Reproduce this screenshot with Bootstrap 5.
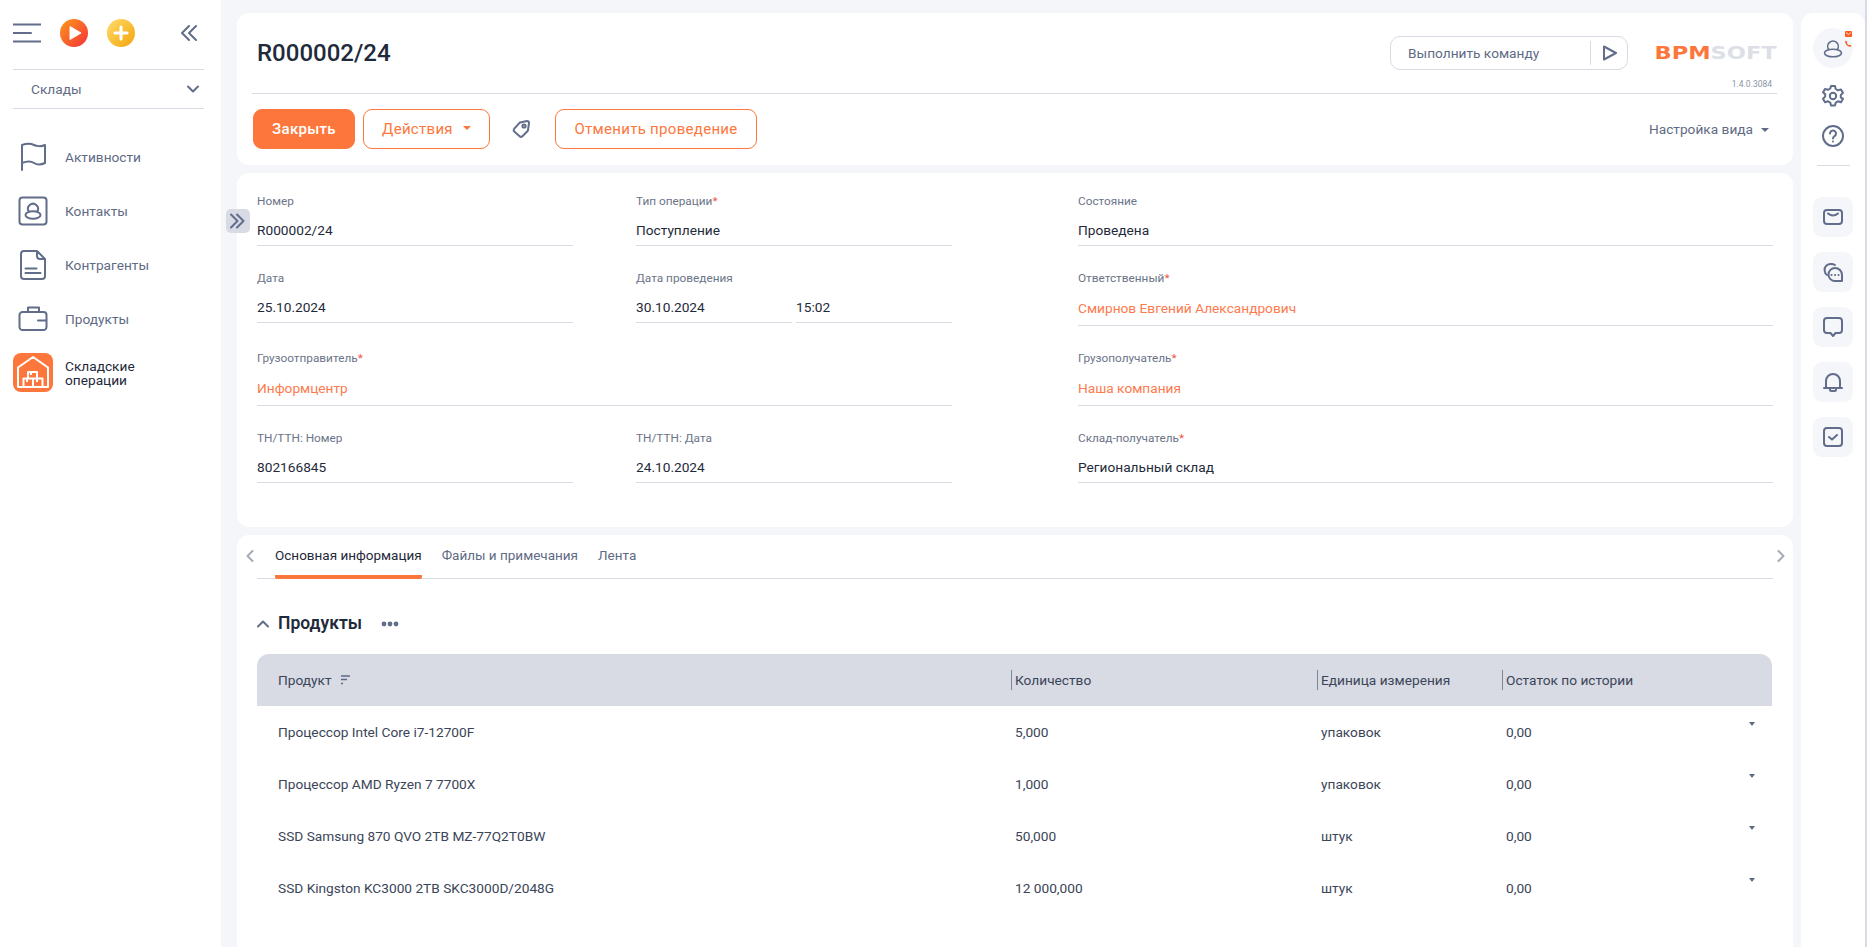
<!DOCTYPE html>
<html lang="ru">
<head>
  <meta charset="UTF-8">
  <title>R000002/24</title>
  <link href="https://cdn.jsdelivr.net/npm/bootstrap@5.3.0/dist/css/bootstrap.min.css" rel="stylesheet">
  <style>
    :root {
      --brand: #fd773c;
      --ink: #1f2a3a;
      --muted: #5f6b85;
      --line: #d8dbe4;
      --page: #f5f6fa;
    }

    html, body {
      height: 947px;
      overflow: hidden;
    }

    body {
      background: var(--page);
      border-right: 2px solid var(--line);
      color: var(--ink);
      font-family: Roboto, "Liberation Sans", sans-serif;
      font-size: 13.7px;
    }

    svg {
      display: block;
      flex: none;
    }

    .ico {
      fill: none;
      stroke: #616d8a;
      stroke-width: 2;
      stroke-linecap: round;
      stroke-linejoin: round;
    }

    /* left menu */
    .side {
      width: 221px;
      height: 947px;
      flex: none;
      background: #fff;
      padding: 0 17px 0 13px;
    }

    .side-top {
      height: 69px;
      padding-top: 19px;
    }

    .side-section {
      height: 40px;
      padding: 0 5px 0 18px;
      border-top: 1px solid var(--line);
      border-bottom: 1px solid var(--line);
      color: var(--muted);
    }

    .side-nav {
      margin-top: 28px;
      gap: 14px;
    }

    .side-nav a {
      height: 40px;
      gap: 12px;
      color: var(--muted);
      text-decoration: none;
      line-height: 14px;
    }

    .side-nav a.active {
      color: var(--ink);
    }

    /* cards */
    .content {
      width: 1556px;
      margin-left: 16px;
      padding-top: 13px;
      gap: 8px;
      height: 947px;
    }

    .panel {
      background: #fff;
      border-radius: 12px;
    }

    .head-card {
      height: 152px;
      padding: 0 16px 0 15px;
    }

    .title-row {
      height: 81px;
      border-bottom: 1px solid var(--line);
      padding-left: 5px;
    }

    .title-row h1 {
      font-size: 24px;
      font-weight: 500;
      margin: 26px 0 0;
    }

    .command {
      width: 238px;
      height: 34px;
      margin-top: 23px;
      border: 1px solid var(--line);
      border-radius: 10px;
      color: var(--muted);
      padding-left: 17px;
    }

    .command i {
      width: 1px;
      height: 24px;
      background: var(--line);
      margin-left: auto;
      margin-right: 11px;
    }

    .command svg {
      margin-right: 9px;
    }

    .logo-box {
      width: 149px;
      padding-top: 30px;
      text-align: right;
    }

    .logo {
      display: inline-block;
      font-family: "DejaVu Sans", sans-serif;
      font-size: 18px;
      font-weight: 700;
      line-height: 20px;
      color: #dcdfe6;
      transform: scaleX(1.25);
      transform-origin: right center;
    }

    .logo b {
      color: var(--brand);
    }

    .version {
      margin-top: 13px;
      padding-right: 5px;
      font-size: 8.5px;
      line-height: 12px;
      color: #8d94a6;
    }

    .btn-brand, .btn-line {
      height: 40px;
      border-radius: 9px;
      font-size: 15px;
      padding: 0;
      letter-spacing: .3px;
      white-space: nowrap;
    }

    .btn-brand {
      width: 102px;
      margin-left: 1px;
      background: var(--brand);
      border: 1px solid var(--brand);
      color: #fff;
      font-weight: 500;
    }

    .btn-line {
      background: #fff;
      border: 1px solid var(--brand);
      color: var(--brand);
    }

    .btn-line.dropdown-toggle::after {
      margin-left: 10px;
    }

    .view-set {
      color: var(--muted);
      padding-right: 8px;
    }

    .view-set::after {
      display: inline-block;
      content: "";
      margin-left: 8px;
      vertical-align: 2px;
      border-top: 4px solid var(--muted);
      border-left: 4px solid transparent;
      border-right: 4px solid transparent;
    }

    /* form */
    .form-card {
      height: 354px;
      padding: 20px 20px 0;
      position: relative;
    }

    .form-grid {
      display: grid;
      grid-template-columns: 316px 316px 758px;
      grid-template-rows: 77px 80px 80px 53px;
      column-gap: 63px;
    }

    .col-right {
      margin-left: 63px;
    }

    .field {
      height: 53px;
      border-bottom: 1px solid var(--line);
    }

    .field.tall {
      height: 56px;
    }

    .field label, .field-label {
      display: block;
      height: 16px;
      font-size: 11.8px;
      line-height: 16px;
      color: #6b7488;
      margin: 0;
    }

    .field label em {
      color: #f0523d;
      font-style: normal;
    }

    .field p {
      margin: 11px 0 0;
      line-height: 20px;
    }

    .field.tall p {
      margin-top: 12px;
    }

    .field a {
      color: #fd7a4e;
      text-decoration: none;
    }

    .date-pair {
      display: grid;
      grid-template-columns: 1fr 1fr;
      gap: 4px;
    }

    .date-pair .field {
      height: 37px;
    }

    .toggle-panel {
      position: absolute;
      left: -11px;
      top: 36px;
      width: 24px;
      height: 24px;
      background: var(--line);
      border-radius: 5px;
      border: 0;
      padding: 0 0 0 4px;
    }

    /* tabs and table */
    .tabs-card {
      flex: 1;
      padding: 0 20px;
      position: relative;
      border-radius: 12px 12px 0 0;
    }

    .tabs {
      height: 44px;
      gap: 20px;
      border-bottom: 1px solid var(--line);
      padding-left: 18px;
      font-size: 13.5px;
    }

    .tabs a {
      height: 44px;
      line-height: 41px;
      color: var(--muted);
      text-decoration: none;
    }

    .tabs a.active {
      color: var(--ink);
      border-bottom: 4px solid var(--brand);
      border-radius: 0 0 2px 2px;
    }

    .tab-arrow {
      position: absolute;
      top: 15px;
    }

    .section-head {
      height: 75px;
      padding-top: 14px;
      gap: 8px;
    }

    .section-head h2 {
      font-size: 17.5px;
      font-weight: 600;
      margin: 0 0 0 1px;
    }

    .products {
      width: 1515px;
      table-layout: fixed;
      margin: 0;
      --bs-table-color: #3b4558;
    }

    .products th, .products td {
      height: 52px;
      padding: 0 0 0 4px;
      border: 0;
      vertical-align: middle;
      font-weight: 400;
    }

    .products th {
      background: var(--line);
    }

    .products th:first-child {
      border-radius: 12px 0 0 0;
    }

    .products th:last-child {
      border-radius: 0 12px 0 0;
    }

    .products tr > :first-child {
      padding-left: 21px;
    }

    .products th span {
      display: block;
      line-height: 20px;
      margin-left: -4px;
      padding-left: 3px;
      border-left: 1px solid #7d8597;
    }

    .products th:first-child span {
      display: flex;
      align-items: center;
      gap: 9px;
      border: 0;
      margin: 0;
      padding: 0;
    }

    .row-caret {
      align-self: flex-start;
      margin: 0 17px 0 0;
      border-top: 4px solid var(--muted);
      border-left: 3.5px solid transparent;
      border-right: 3.5px solid transparent;
    }

    /* right rail */
    .rail {
      width: 64px;
      margin: 13px 0 0 8px;
      height: 934px;
      padding-top: 15px;
      border-radius: 12px 12px 0 0;
    }

    .avatar {
      width: 40px;
      height: 40px;
      border-radius: 50%;
      background: var(--page);
      position: relative;
    }

    .avatar .badge-mail, .avatar .badge-call {
      position: absolute;
      right: 1px;
    }

    .avatar .badge-mail { top: 3px; }
    .avatar .badge-call { top: 12px; }

    .rail hr {
      width: 33px;
      margin: 18px 0 31px;
      border-color: var(--line);
      opacity: 1;
    }

    .tile {
      width: 40px;
      height: 40px;
      border-radius: 9px;
      background: var(--page);
      margin-bottom: 15px;
    }
  </style>
</head>
<body class="d-flex">

  <!-- левое меню -->
  <aside class="side">
    <div class="side-top d-flex align-items-start">
      <svg width="28" height="28" class="ico" viewBox="0 0 28 28"><path d="M0 5.500h28M0 14h18M0 22.500h28"/></svg>
      <svg width="28" height="28" viewBox="0 0 28 28" style="margin-left:19px">
        <defs><linearGradient id="g1" x1="0" y1="0" x2="1" y2="1"><stop offset="0" stop-color="#fb9a1c"/><stop offset="1" stop-color="#f5303a"/></linearGradient></defs>
        <circle cx="14" cy="14" r="14" fill="url(#g1)"/><path d="M10 7.500 21 14 10 20.500z" fill="#fff" stroke="#fff" stroke-linejoin="round"/>
      </svg>
      <svg width="28" height="28" viewBox="0 0 28 28" style="margin-left:19px">
        <defs><linearGradient id="g2" x1="0" y1="0" x2="1" y2="1"><stop offset="0" stop-color="#ffdc6b"/><stop offset="1" stop-color="#f3a40b"/></linearGradient></defs>
        <circle cx="14" cy="14" r="14" fill="url(#g2)"/><path d="M14 8v12M8 14h12" stroke="#fff" stroke-width="3" stroke-linecap="round"/>
      </svg>
      <svg width="16" height="16" class="ico" viewBox="0 0 16 16" style="margin:6px 7px 0 auto"><path d="M8 1 1 8l7 7M15 1 8 8l7 7"/></svg>
    </div>
    <div class="side-section d-flex align-items-center justify-content-between">
      <span>Склады</span>
      <svg width="12" height="8" class="ico" viewBox="0 0 12 8"><path d="M1 1.500l5 5 5-5"/></svg>
    </div>
    <nav class="side-nav d-flex flex-column">
      <a class="d-flex align-items-center" href="#">
        <svg width="40" height="40" class="ico" viewBox="0 0 40 40"><path d="M9 33V8c6-2 10-1 12 0s7 2 11 0v18c-4 2-8 2-11 0s-7-2-12 0"/></svg>
        Активности
      </a>
      <a class="d-flex align-items-center" href="#">
        <svg width="40" height="40" class="ico" viewBox="0 0 40 40"><rect x="6.500" y="6.500" width="27" height="27" rx="3"/><path d="M15.800 20.500a5 5 0 1 1 8.400 0"/><ellipse cx="20" cy="24" rx="7.500" ry="3.800"/></svg>
        Контакты
      </a>
      <a class="d-flex align-items-center" href="#">
        <svg width="40" height="40" class="ico" viewBox="0 0 40 40"><path d="M11 6h13l8 8v17a3 3 0 0 1-3 3H11a3 3 0 0 1-3-3V9a3 3 0 0 1 3-3zM24 6v5a3 3 0 0 0 3 3h5M12.500 23.500h11M12.500 28h15"/></svg>
        Контрагенты
      </a>
      <a class="d-flex align-items-center" href="#">
        <svg width="40" height="40" class="ico" viewBox="0 0 40 40"><path d="M15 13V8.500h11V13M9.500 13h21a3 3 0 0 1 3 3v12a3 3 0 0 1-3 3h-21a3 3 0 0 1-3-3V16a3 3 0 0 1 3-3zM25 21.500h8.500"/></svg>
        Продукты
      </a>
      <a class="d-flex align-items-center active" href="#">
        <svg width="40" height="40" viewBox="0 0 40 40">
          <rect width="40" height="39" rx="8" fill="#fd773c"/>
          <path d="M5 34V14.500L20 4l15 10.500V34zM15 19h9v6.500h-9zM10.500 25.500H20V34h-9.500zM20 25.500h9.500V34H20zM18 19v3M14 26v3M24 26v3" fill="none" stroke="#fff" stroke-width="2" stroke-linejoin="round"/>
        </svg>
        <span>Складские<br>операции</span>
      </a>
    </nav>
  </aside>

  <main class="content d-flex flex-column">
    <!-- шапка -->
    <section class="panel head-card">
      <div class="title-row d-flex align-items-start">
        <h1>R000002/24</h1>
        <div class="command d-flex align-items-center ms-auto">
          <span>Выполнить команду</span><i></i>
          <svg width="16" height="16" class="ico" viewBox="0 0 16 16"><path d="M2 1.500 14 8 2 14.500z"/></svg>
        </div>
        <div class="logo-box">
          <span class="logo"><b>BPM</b>SOFT</span>
          <div class="version">1.4.0.3084</div>
        </div>
      </div>
      <div class="d-flex align-items-center" style="padding-top:15px">
        <button class="btn btn-brand">Закрыть</button>
        <button class="btn btn-line dropdown-toggle" style="margin-left:8px;width:127px">Действия</button>
        <svg width="20" height="20" class="ico" viewBox="0 0 20 20" style="margin:0 24px 0 21px"><path d="M9 3.500 16 2a2 2 0 0 1 2 2l-1 7a2 2 0 0 1-.6 1.200l-5 5a2 2 0 0 1-2.800 0l-5.300-4.600a2 2 0 0 1 0-2.900l5-5.600a2 2 0 0 1 .7-.6z"/><circle cx="13" cy="7" r="1.600"/></svg>
        <button class="btn btn-line" style="width:202px">Отменить проведение</button>
        <span class="view-set ms-auto">Настройка вида</span>
      </div>
    </section>

    <!-- реквизиты -->
    <section class="panel form-card">
      <button class="toggle-panel" aria-label="Свернуть">
        <svg width="15" height="16" class="ico" viewBox="0 0 15 16"><path d="M1 1.500 7.500 8 1 14.500M7 1.500 13.500 8 7 14.500"/></svg>
      </button>
      <div class="form-grid">
        <div class="field"><label>Номер</label><p>R000002/24</p></div>
        <div class="field"><label>Тип операции<em>*</em></label><p>Поступление</p></div>
        <div class="field col-right"><label>Состояние</label><p>Проведена</p></div>

        <div class="field"><label>Дата</label><p>25.10.2024</p></div>
        <div>
          <div class="field-label">Дата проведения</div>
          <div class="date-pair">
            <div class="field"><p>30.10.2024</p></div>
            <div class="field"><p>15:02</p></div>
          </div>
        </div>
        <div class="field tall col-right"><label>Ответственный<em>*</em></label><p><a href="#">Смирнов Евгений Александрович</a></p></div>

        <div class="field tall" style="grid-column:1 / span 2"><label>Грузоотправитель<em>*</em></label><p><a href="#">Информцентр</a></p></div>
        <div class="field tall col-right"><label>Грузополучатель<em>*</em></label><p><a href="#">Наша компания</a></p></div>

        <div class="field"><label>ТН/ТТН: Номер</label><p>802166845</p></div>
        <div class="field"><label>ТН/ТТН: Дата</label><p>24.10.2024</p></div>
        <div class="field col-right"><label>Склад-получатель<em>*</em></label><p>Региональный склад</p></div>
      </div>
    </section>

    <!-- вкладки -->
    <section class="panel tabs-card">
      <svg width="8" height="12" class="ico tab-arrow" viewBox="0 0 8 12" style="left:9px;stroke:#a4aab8"><path d="M6.500 1 1.500 6l5 5"/></svg>
      <svg width="8" height="12" class="ico tab-arrow" viewBox="0 0 8 12" style="right:8px;stroke:#a4aab8"><path d="M1.500 1l5 5-5 5"/></svg>
      <div class="tabs d-flex">
        <a class="active" href="#">Основная информация</a>
        <a href="#">Файлы и примечания</a>
        <a href="#">Лента</a>
      </div>
      <div class="section-head d-flex align-items-center">
        <svg width="12" height="8" class="ico" viewBox="0 0 12 8"><path d="M1 6.500l5-5 5 5"/></svg>
        <h2>Продукты</h2>
        <svg width="18" height="6" viewBox="0 0 18 6" style="margin-left:11px" fill="#616d8a"><circle cx="3" cy="3" r="2.400"/><circle cx="9" cy="3" r="2.400"/><circle cx="15" cy="3" r="2.400"/></svg>
      </div>
      <table class="table products">
        <colgroup>
          <col style="width:754px"><col style="width:306px"><col style="width:185px"><col style="width:270px">
        </colgroup>
        <thead>
          <tr>
            <th><span>Продукт <svg width="9" height="10" viewBox="0 0 9 10" fill="none" stroke="#5f6b85" stroke-width="1.500"><path d="M0 1h9M0 4.500h6M0 8.500h2"/></svg></span></th>
            <th><span>Количество</span></th>
            <th><span>Единица измерения</span></th>
            <th><span>Остаток по истории</span></th>
          </tr>
        </thead>
        <tbody>
          <tr><td>Процессор Intel Core i7-12700F</td><td>5,000</td><td>упаковок</td><td><div class="d-flex justify-content-between"><span>0,00</span><i class="row-caret"></i></div></td></tr>
          <tr><td>Процессор AMD Ryzen 7 7700X</td><td>1,000</td><td>упаковок</td><td><div class="d-flex justify-content-between"><span>0,00</span><i class="row-caret"></i></div></td></tr>
          <tr><td>SSD Samsung 870 QVO 2TB MZ-77Q2T0BW</td><td>50,000</td><td>штук</td><td><div class="d-flex justify-content-between"><span>0,00</span><i class="row-caret"></i></div></td></tr>
          <tr><td>SSD Kingston KC3000 2TB SKC3000D/2048G</td><td>12 000,000</td><td>штук</td><td><div class="d-flex justify-content-between"><span>0,00</span><i class="row-caret"></i></div></td></tr>
        </tbody>
      </table>
    </section>
  </main>

  <!-- правая панель -->
  <aside class="panel rail d-flex flex-column align-items-center">
    <div class="avatar d-flex align-items-center justify-content-center">
      <svg width="20" height="20" class="ico" viewBox="0 0 20 20" style="stroke-width:1.600"><path d="M5.700 11.500a5.300 5.300 0 1 1 8.600 0"/><ellipse cx="10" cy="15" rx="8.500" ry="3.800"/></svg>
      <svg class="badge-mail" width="7" height="6" viewBox="0 0 7 6"><rect width="7" height="6" rx="1" fill="#fd5a1e"/><path d="M1 1.500 3.500 3.500 6 1.500" stroke="#fff" fill="none" stroke-width=".8"/></svg>
      <svg class="badge-call" width="7" height="7" viewBox="0 0 7 7"><path d="M1 .5 2.300 2 1.800 3a4 4 0 0 0 2.200 2.200l1-.5L6.500 6 5.500 6.800C2.500 6.800 0 4 .2 1.200z" fill="#fd5a1e"/></svg>
    </div>
    <svg width="24" height="24" class="ico" viewBox="0 0 24 24" style="margin-top:16px"><circle cx="12" cy="12" r="3.200"/><path d="M10 2h4l.7 3 2.300 1.300 3-.9 2 3.500-2.200 2.100v2.600L22 14.700l-2 3.500-3-.9-2.300 1.300-.7 3h-4l-.7-3L7 17.300l-3 .9-2-3.500 2.200-2.100v-2.600L2 8.400l2-3.500 3 .9 2.300-1.300z"/></svg>
    <svg width="22" height="22" class="ico" viewBox="0 0 22 22" style="margin-top:17px"><circle cx="11" cy="11" r="10"/><path d="M8 8.500a3 3 0 1 1 4.500 2.600c-1 .6-1.500 1.100-1.500 2.400M11 16.500v.1"/></svg>
    <hr>
    <div class="tile d-flex align-items-center justify-content-center">
      <svg width="20" height="16" class="ico" viewBox="0 0 20 16"><rect x="1" y="1" width="18" height="14" rx="3"/><path d="M5 4.500c3 2.500 7 2.500 10 0"/></svg>
    </div>
    <div class="tile d-flex align-items-center justify-content-center">
      <svg width="20" height="20" class="ico" viewBox="0 0 20 20"><path d="M4 13C1 11 1 6 3 4s6-3 9-1"/><path d="M12 6a7 7 0 0 1 7 7v6h-7a6.500 6.500 0 1 1 0-13z"/><path d="M8.500 13h.1M12 13h.1M15.500 13h.1"/></svg>
    </div>
    <div class="tile d-flex align-items-center justify-content-center">
      <svg width="20" height="20" class="ico" viewBox="0 0 20 20"><path d="M4 1h12a3 3 0 0 1 3 3v9a3 3 0 0 1-3 3h-3.500L10 19l-2.500-3H4a3 3 0 0 1-3-3V4a3 3 0 0 1 3-3z"/></svg>
    </div>
    <div class="tile d-flex align-items-center justify-content-center">
      <svg width="20" height="20" class="ico" viewBox="0 0 20 20"><path d="M1 16h18M3 16V9a7 7 0 0 1 14 0v7M7 16v1.500a1.500 1.500 0 0 0 1.500 1.500h3a1.500 1.500 0 0 0 1.500-1.500V16"/></svg>
    </div>
    <div class="tile d-flex align-items-center justify-content-center">
      <svg width="20" height="20" class="ico" viewBox="0 0 20 20"><rect x="1" y="1" width="18" height="18" rx="3"/><path d="M6 10l3 2.500 5-4.500"/></svg>
    </div>
  </aside>

  <script src="https://cdn.jsdelivr.net/npm/bootstrap@5.3.0/dist/js/bootstrap.bundle.min.js"></script>
</body>
</html>
